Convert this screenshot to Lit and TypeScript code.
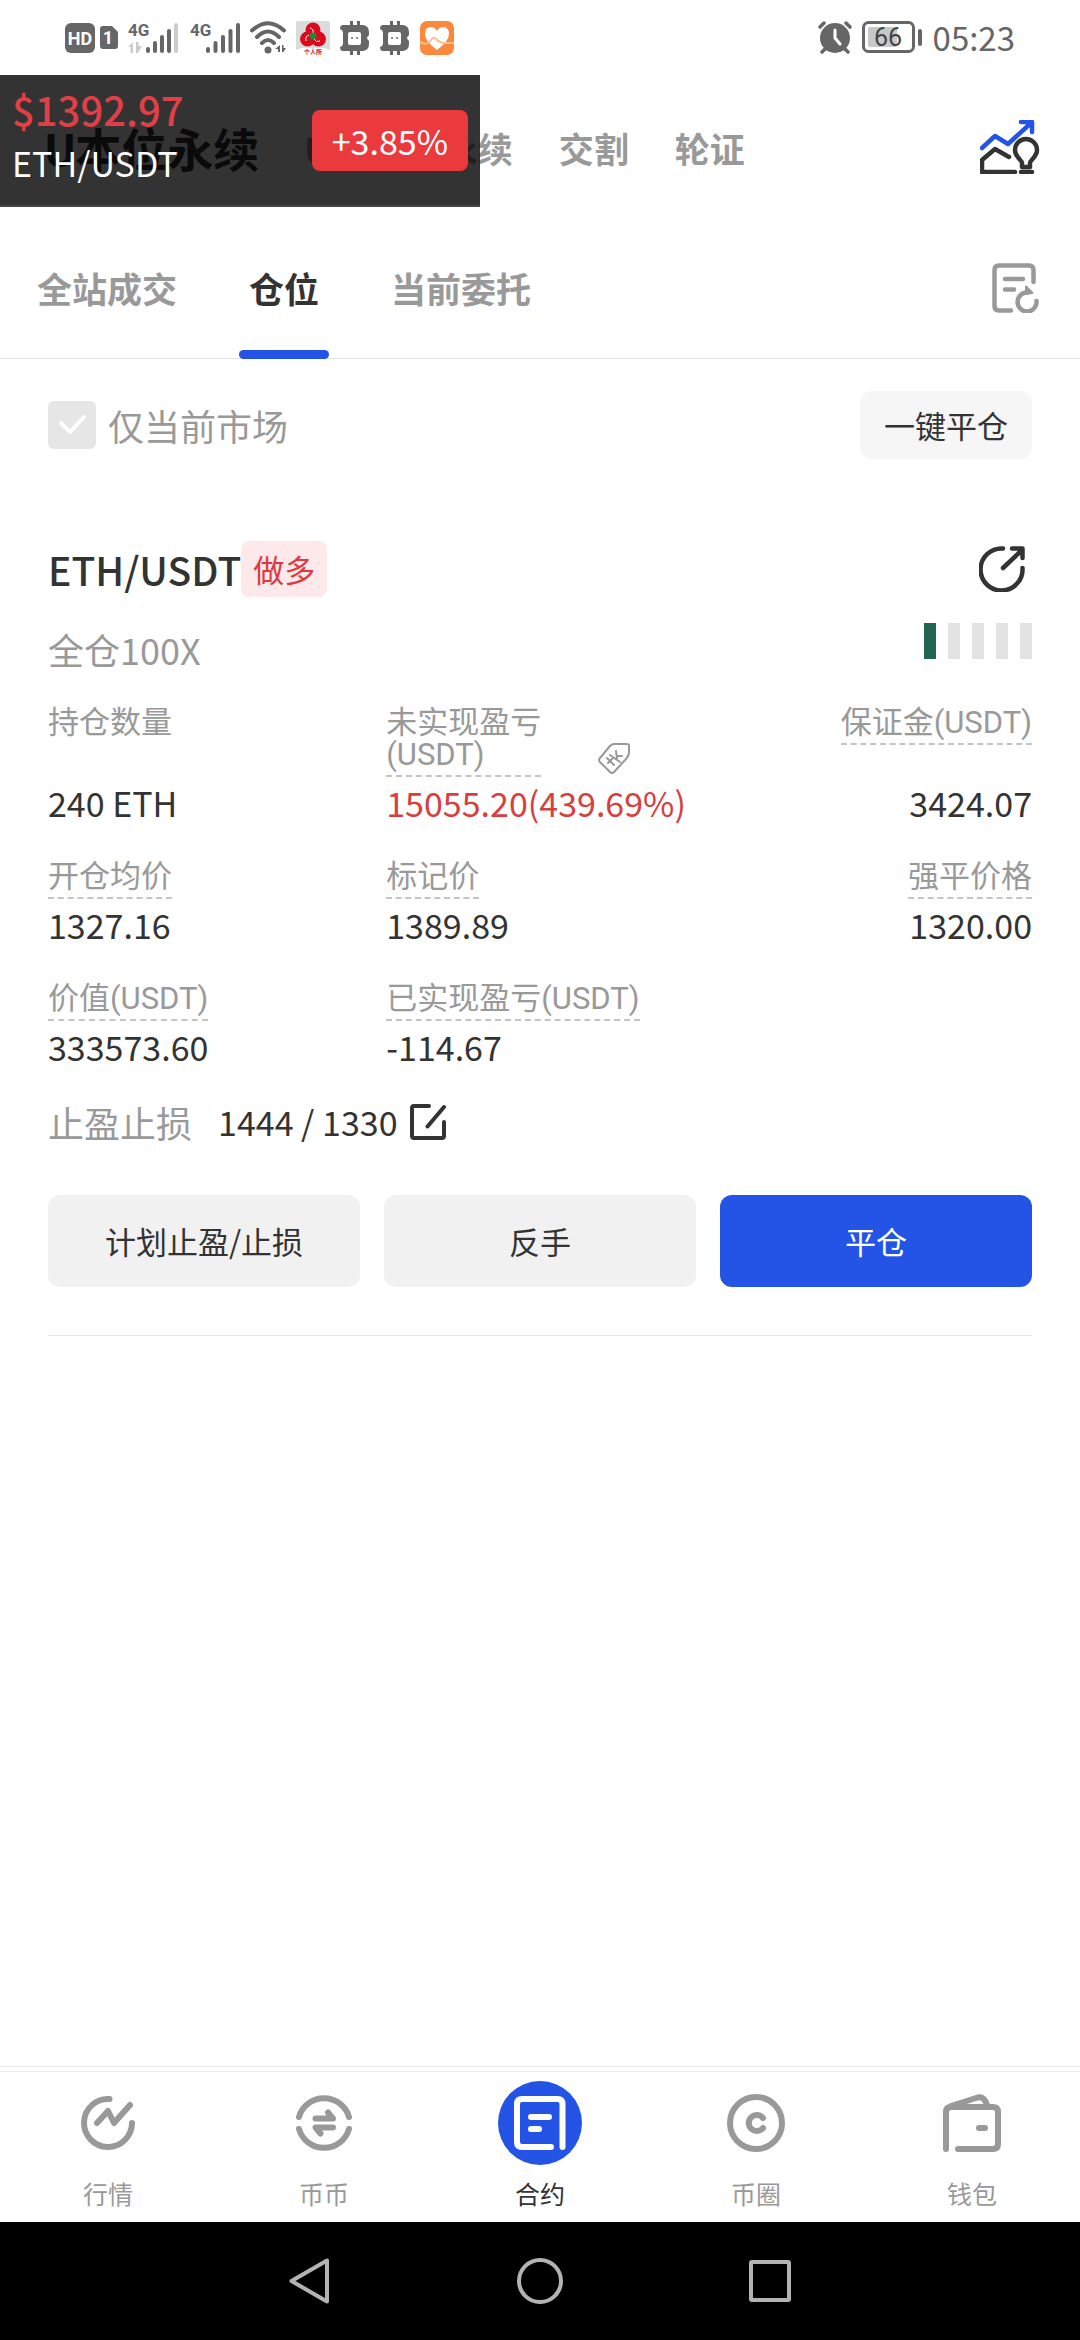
import { LitElement, html, css, svg, nothing } from "lit";
import { customElement, property, state } from "lit/decorators.js";
import { classMap } from "lit/directives/class-map.js";

const base = css`
  :host {
    display: block;
    font-family: "Noto Sans CJK SC", "Noto Sans", sans-serif;
    color: #333;
  }
  * {
    box-sizing: border-box;
  }
  button,
  input {
    font: inherit;
    color: inherit;
    margin: 0;
    padding: 0;
    border: 0;
    background: none;
  }
  svg {
    display: block;
    flex: none;
  }
  .line {
    fill: none;
    stroke: currentColor;
    stroke-linecap: round;
    stroke-linejoin: round;
  }
`;

/* Cellular signal: network label over data arrows, five rising bars. */
const signal = (start: number, pitch: number, bars: number, data: boolean) => svg`
  <text class="net" x="0" y="15">4G</text>
  ${data
    ? svg`<path fill="#ccc" d="M5 21v11H2.500v-6H0zM8 32V21h2.500v4H14l-4 7z"></path>`
    : nothing}
  ${[0, 1, 2, 3, 4].map(
    (i) => svg`<rect x=${start + i * pitch} y=${26 - i * 6} width="4" height=${6 + i * 6} rx="2"
      fill=${i < bars ? "#666" : "#ccc"}></rect>`
  )}`;

const bitcoinBot = html`
  <svg width="30" height="34" viewBox="0 0 30 34" aria-hidden="true">
    <path fill="#666" d="M10 0h3v4h4V0h3v4h3q6 1 6 7v3q-2 2-2 3t2 3v3q0 6-6 7h-3v4h-3v-4h-4v4h-3v-4H3q-3 0-3-4 3-1 3-4V12Q3 9 0 8q0-4 3-4h7z"></path>
    <rect x="8" y="11" width="13" height="13" rx="2" fill="#fff"></rect>
    <circle cx="12" cy="17" r="1" fill="#666"></circle>
    <circle cx="17" cy="17" r="1" fill="#666"></circle>
  </svg>`;

@customElement("status-bar")
class StatusBar extends LitElement {
  static styles = [
    base,
    css`
      .bar {
        display: flex;
        align-items: center;
        height: 75px;
        padding: 0 65px;
        color: #666;
      }
      .icons {
        display: flex;
        align-items: center;
        gap: 10px;
      }
      .pair {
        display: flex;
        align-items: center;
        gap: 5px;
      }
      .right {
        margin-left: auto;
      }
      .time {
        font-size: 33px;
        line-height: 36px;
        padding-bottom: 2px;
      }
      .net {
        font: 700 17px Roboto, sans-serif;
        fill: #666;
      }
      .hd {
        font: 700 18px Roboto, sans-serif;
        fill: #fff;
      }
      .tiny {
        font: 700 6px "Noto Sans CJK SC", sans-serif;
        fill: #d8101c;
      }
      .level {
        font: 400 25px Roboto, sans-serif;
        fill: #444;
      }
    `,
  ];
  render() {
    return html`
      <div class="bar">
        <div class="icons">
          <div class="pair">
            <svg width="30" height="30" viewBox="0 0 30 30">
              <rect width="30" height="30" rx="6" fill="#666"></rect>
              <text class="hd" x="15" y="22" text-anchor="middle">HD</text>
            </svg>
            <svg width="18" height="23" viewBox="0 0 18 23">
              <path fill="#666" d="M3 0h9l6 6v14q0 3-3 3H3q-3 0-3-3V3q0-3 3-3z"></path>
              <text class="hd" x="8" y="18" text-anchor="middle">1</text>
            </svg>
          </div>
          <svg width="52" height="33" viewBox="0 0 52 33">${signal(18, 7, 4, true)}</svg>
          <svg width="50" height="33" viewBox="0 0 50 33">${signal(16, 7.5, 5, false)}</svg>
          <svg width="36" height="33" viewBox="0 0 36 33" color="#666">
            <g class="line" stroke-width="4">
              <path d="M2 9.500Q18-5 34 9.500M7 16Q18 5 29 16M12 22q6-6 12 0"></path>
            </g>
            <circle cx="18" cy="29" r="3.500" fill="#666"></circle>
            <path fill="#666" d="M30 24v7h-2v-3h-3zM32 31v-7h1.500v3H36l-2.500 4z"></path>
          </svg>
          <svg width="34" height="34" viewBox="0 0 34 34">
            <path fill="#d9dcdd" d="M2 0h30q2 0 2 2v27q-9-4-17-1-8-3-17 1V2q0-2 2-2z"></path>
            <g fill="#dc0a1c">
              <circle cx="17" cy="9" r="7.500"></circle>
              <circle cx="11.500" cy="18" r="7.500"></circle>
              <circle cx="22.500" cy="18" r="7.500"></circle>
            </g>
            <path fill="none" stroke="#fff" d="M14 7q4 1 3 5M10 20q-1-5 3-6M24 20q-4 2-6-2"></path>
            <circle cx="17" cy="15" r="3.500" fill="#1d8a3e"></circle>
            <text class="tiny" x="17" y="33" text-anchor="middle">个人所</text>
          </svg>
          ${bitcoinBot} ${bitcoinBot}
          <svg width="34" height="34" viewBox="0 0 34 34">
            <rect width="34" height="34" rx="7" fill="#fb883c"></rect>
            <path fill="#fff" d="M17 29Q5 20 5 13q0-7 6-7 4 0 6 4 2-4 6-4 6 0 6 7 0 7-12 16z"></path>
            <path fill="none" stroke="#ffc18f" stroke-width="2" d="M0 21l5 2q3 0 6-4t5-1q4 4 9 4h9"></path>
          </svg>
        </div>
        <div class="icons right">
          <svg width="34" height="33" viewBox="0 0 34 33">
            <circle cx="17" cy="17" r="15" fill="#666"></circle>
            <path class="line" color="#666" stroke-width="3.500" d="M2 6l4-4M32 6l-4-4M4 31l4-4M30 31l-4-4"></path>
            <path class="line" color="#fff" stroke-width="3" d="M17 9v8l5 6"></path>
          </svg>
          <svg width="61" height="33" viewBox="0 0 61 33">
            <rect x="1.500" y="1.500" width="50" height="29" rx="5" fill="none" stroke="#666" stroke-width="3"></rect>
            <rect x="6" y="6" width="29" height="20" rx="2" fill="#c8c8c8"></rect>
            <rect x="56" y="8" width="4" height="17" rx="2" fill="#666"></rect>
            <text class="level" x="26" y="25" text-anchor="middle">66</text>
          </svg>
          <span class="time">05:23</span>
        </div>
      </div>
    `;
  }
}

/* Floating quote shown above the page. */
@customElement("price-float")
class PriceFloat extends LitElement {
  static styles = [
    base,
    css`
      .box {
        display: flex;
        align-items: center;
        justify-content: space-between;
        width: 480px;
        height: 132px;
        padding: 0 12px;
        background: rgba(0, 0, 0, 0.8);
        border-bottom: 2px solid #444;
      }
      .price {
        font-size: 40px;
        font-weight: 500;
        line-height: 54px;
        color: #e04045;
      }
      .pair {
        font-size: 34px;
        line-height: 54px;
        color: #fff;
      }
      .texts {
        padding-bottom: 8px;
      }
      .change {
        padding: 0 20px;
        border-radius: 8px;
        background: #ea3a3e;
        color: #fff;
        font-size: 34px;
        line-height: 61px;
      }
    `,
  ];
  render() {
    return html`
      <div class="box">
        <div class="texts">
          <div class="price">$1392.97</div>
          <div class="pair">ETH/USDT</div>
        </div>
        <div class="change">+3.85%</div>
      </div>
    `;
  }
}

interface Metric {
  label: string;
  value: string;
  hint?: boolean;
  share?: boolean;
  up?: boolean;
  end?: boolean;
}

const metrics: Metric[] = [
  { label: "持仓数量", value: "240 ETH" },
  { label: "未实现盈亏(USDT)", value: "15055.20(439.69%)", hint: true, share: true, up: true },
  { label: "保证金(USDT)", value: "3424.07", hint: true, end: true },
  { label: "开仓均价", value: "1327.16", hint: true },
  { label: "标记价", value: "1389.89", hint: true },
  { label: "强平价格", value: "1320.00", hint: true, end: true },
  { label: "价值(USDT)", value: "333573.60", hint: true },
  { label: "已实现盈亏(USDT)", value: "-114.67", hint: true },
];

@customElement("position-card")
class PositionCard extends LitElement {
  @property({ type: Number }) risk = 1;

  static styles = [
    base,
    css`
      .card {
        padding: 0 0 48px;
        border-bottom: 1px solid #e6e6e6;
      }
      .row {
        display: flex;
        align-items: center;
        justify-content: space-between;
      }
      .head {
        height: 56px;
        padding-right: 7px;
      }
      .symbol {
        display: flex;
        align-items: center;
      }
      h2 {
        margin: 0;
        font-size: 39px;
        font-weight: 500;
        line-height: 56px;
      }
      .side {
        padding: 0 12px;
        border-radius: 8px;
        background: #fde9ea;
        color: #dc3a40;
        font-size: 31px;
        line-height: 56px;
      }
      .mode {
        margin-top: 26px;
        font-size: 36px;
        line-height: 52px;
        color: #999;
      }
      .risk {
        display: flex;
        gap: 12px;
        padding-bottom: 16px;
      }
      .tick {
        width: 12px;
        height: 36px;
        background: #e3e3e3;
      }
      .tick.on {
        background: #216651;
      }
      .metrics {
        display: grid;
        grid-template-columns: 11fr 13fr 8fr;
        row-gap: 36px;
        margin: 32px 0 0;
      }
      .metric {
        display: flex;
        flex-direction: column;
        align-items: flex-start;
        justify-content: space-between;
        gap: 4px;
      }
      .metric.end {
        align-items: flex-end;
      }
      dt {
        display: flex;
        align-items: flex-end;
        gap: 57px;
        font-family: Roboto, "Noto Sans CJK SC", sans-serif;
        font-size: 31px;
        line-height: 32px;
        color: #999;
        white-space: nowrap;
      }
      .hint {
        padding-bottom: 4px;
        border-bottom: 2px dashed #c4c4c4;
      }
      .narrow {
        width: 155px;
        white-space: normal;
      }
      dd {
        margin: 0;
        font-size: 34px;
        line-height: 44px;
      }
      dd.up {
        color: #d6403f;
      }
      .limits {
        display: flex;
        align-items: center;
        margin-top: 31px;
        font-size: 34px;
        line-height: 44px;
      }
      .limits .name {
        font-size: 36px;
        color: #999;
        padding-right: 26px;
      }
      .edit {
        padding-left: 12px;
      }
      .actions {
        display: grid;
        grid-template-columns: repeat(3, 1fr);
        gap: 24px;
        margin-top: 51px;
      }
      .action {
        border-radius: 12px;
        background: #f1f1f1;
        font-size: 31px;
        line-height: 92px;
      }
      .action.primary {
        background: #2354e6;
        color: #fff;
      }
    `,
  ];

  private metric(m: Metric) {
    return html`
      <div class=${classMap({ metric: true, end: !!m.end })}>
        <dt>
          <span class=${classMap({ hint: !!m.hint, narrow: !!m.share })}>${m.label}</span>
          ${m.share
            ? html`<svg width="32" height="35" viewBox="0 0 32 35" color="#999" aria-hidden="true">
                <path class="line" stroke-width="2" d="M16 2h13q2 0 2 2v6q0 4-3 7L16 30q-2 2-4 0L2 20q-2-2 0-4L12 4q2-2 4-2z"></path>
                <path class="line" stroke-width="2" d="M9 16l7 7M12 13l10 7M10 21l5-5M18 9l1 8M20 14h4"></path>
              </svg>`
            : nothing}
        </dt>
        <dd class=${classMap({ up: !!m.up })}>${m.value}</dd>
      </div>
    `;
  }

  render() {
    return html`
      <article class="card">
        <div class="row head">
          <div class="symbol">
            <h2>ETH/USDT</h2>
            <span class="side">做多</span>
          </div>
          <button aria-label="分享">
            <svg width="46" height="46" viewBox="0 0 46 46">
              <path class="line" stroke-width="4.500" d="M24 2.500A21 21 0 1 0 43.500 22M24 22L43 4M33 2.500h10.500V12"></path>
            </svg>
          </button>
        </div>
        <div class="row mode">
          <span>全仓100X</span>
          <div class="risk">
            ${[1, 2, 3, 4, 5].map((i) => html`<i class=${classMap({ tick: true, on: i <= this.risk })}></i>`)}
          </div>
        </div>
        <dl class="metrics">${metrics.map((m) => this.metric(m))}</dl>
        <div class="limits">
          <span class="name">止盈止损</span>
          <span>1444 / 1330</span>
          <button class="edit" aria-label="修改">
            <svg width="36" height="36" viewBox="0 0 36 36">
              <path class="line" stroke-width="4" d="M19 2H4Q2 2 2 4v28q0 2 2 2h28q2 0 2-2V18M17.500 22.500L34 3"></path>
            </svg>
          </button>
        </div>
        <div class="actions">
          <button class="action">计划止盈/止损</button>
          <button class="action">反手</button>
          <button class="action primary">平仓</button>
        </div>
      </article>
    `;
  }
}

const tabIcons = [
  svg`<path d="M30.500 5A24 24 0 1 0 53 29M18 29l11-12 6 12L51 11"></path>`,
  svg`<path d="M4 23a26 26 0 0 1 50 0M4 35a26 26 0 0 0 50 0M20.500 24.500h17.500l-5-6M38 33.500H20.500l5 6"></path>`,
  svg`<path d="M51.500 53V10q0-5-5-5H11q-5 0-5 5v38q0 5 5 5h29M20 23h18M20 35h8"></path>`,
  svg`<circle cx="29" cy="29" r="26"></circle><path d="M36 24a8 8 0 1 0 0 10"></path>`,
  svg`<path d="M3 55V18q0-5 5-5h42q5 0 5 5v32q0 5-5 5H15M8 12l25-8q8-3 11 7M36 34h6"></path>`,
];
const tabNames = ["行情", "币币", "合约", "币圈", "钱包"];

@customElement("tab-bar")
class TabBar extends LitElement {
  @state() private active = 2;

  static styles = [
    base,
    css`
      nav {
        display: grid;
        grid-template-columns: repeat(5, 1fr);
        height: 156px;
        border-top: 1px solid #ebebeb;
      }
      .tab {
        display: flex;
        flex-direction: column;
        align-items: center;
        margin-top: 4px;
        padding-top: 9px;
        border-top: 1px solid #ebebeb;
        color: #999;
        font-size: 25px;
        line-height: 36px;
      }
      .disc {
        display: flex;
        align-items: center;
        justify-content: center;
        width: 84px;
        height: 84px;
        border-radius: 42px;
        margin-bottom: 10px;
      }
      .on .disc {
        background: #2354e6;
        color: #fff;
      }
      .on {
        color: #333;
      }
    `,
  ];
  render() {
    return html`
      <nav>
        ${tabNames.map(
          (name, i) => html`
            <button class=${classMap({ tab: true, on: i === this.active })} @click=${() => (this.active = i)}>
              <span class="disc">
                <svg width="58" height="58" viewBox="0 0 58 58">
                  <g class="line" stroke-width="6">${tabIcons[i]}</g>
                </svg>
              </span>
              ${name}
            </button>
          `
        )}
      </nav>
    `;
  }
}

@customElement("app-root")
class AppRoot extends LitElement {
  @state() private tab = 1;

  static styles = [
    base,
    css`
      .page {
        position: relative;
        display: flex;
        flex-direction: column;
        min-height: 100vh;
        background: #fff;
      }
      .float {
        position: absolute;
        top: 75px;
        left: 0;
      }
      .markets {
        display: flex;
        align-items: center;
        gap: 46px;
        height: 150px;
        padding: 0 40px 6px 45px;
        font-family: Roboto, "Noto Sans CJK SC", sans-serif;
        font-size: 35px;
        font-weight: 700;
        color: #999;
      }
      .markets .current {
        font-size: 46px;
        color: #333;
      }
      .push {
        margin-left: auto;
      }
      .tabs {
        display: flex;
        align-items: stretch;
        gap: 48px;
        height: 134px;
        padding: 0 40px 0 25px;
        border-bottom: 1px solid #e6e6e6;
        font-size: 35px;
        font-weight: 700;
        color: #999;
      }
      .tabs .push {
        padding-bottom: 8px;
      }
      .tab {
        display: flex;
        flex-direction: column;
        align-items: center;
        justify-content: space-between;
        margin-bottom: -1px;
      }
      .tab.on {
        color: #333;
      }
      .word {
        padding: 0 12px;
        line-height: 125px;
      }
      .mark {
        width: 90px;
        height: 9px;
        border-radius: 5px;
      }
      .on .mark {
        background: #2354e6;
      }
      .filters {
        display: flex;
        align-items: center;
        justify-content: space-between;
        height: 68px;
        margin: 32px 0 82px;
      }
      .only {
        display: flex;
        align-items: center;
        gap: 12px;
        font-size: 36px;
        line-height: 48px;
        color: #999;
      }
      .check {
        display: grid;
      }
      .check > * {
        grid-area: 1 / 1;
      }
      .check input {
        appearance: none;
        width: 48px;
        height: 48px;
        border-radius: 6px;
        background: #e6e6e6;
      }
      .check svg {
        pointer-events: none;
      }
      .all {
        padding: 0 24px;
        border-radius: 12px;
        background: #f6f6f6;
        font-size: 31px;
        line-height: 68px;
      }
      main {
        flex: 1;
        padding: 0 48px;
      }
      .system {
        display: flex;
        align-items: center;
        justify-content: center;
        height: 118px;
        background: #000;
        color: #b3b3b3;
      }
      .system button {
        display: flex;
        justify-content: center;
        flex: 0 1 230px;
      }
    `,
  ];

  render() {
    return html`
      <div class="page">
        <status-bar></status-bar>
        <header class="markets">
          <button class="current">U本位永续</button>
          <button>USD本位永续</button>
          <button>交割</button>
          <button>轮证</button>
          <button class="push" aria-label="行情分析">
            <svg width="60" height="54" viewBox="0 0 60 54">
              <path class="line" color="#2354e6" stroke-width="4.500" d="M2 28l13-12 13 8L51 3M41 2h11v10"></path>
              <path class="line" color="#333" stroke-width="4.500" d="M29 37l-14-8L2 40v12h33M42 47v-4c0-3-7-6-7-13a11 11 0 0 1 22 0c0 7-7 10-7 13v4zM41 52h11"></path>
            </svg>
          </button>
        </header>
        <div class="tabs">
          ${["全站成交", "仓位", "当前委托"].map(
            (name, i) => html`
              <button class=${classMap({ tab: true, on: i === this.tab })} @click=${() => (this.tab = i)}>
                <span class="word">${name}</span>
                <span class="mark"></span>
              </button>
            `
          )}
          <button class="push" aria-label="历史记录">
            <svg width="48" height="50" viewBox="0 0 48 50" color="#999">
              <path class="line" stroke-width="4.500" d="M41.500 19V7q0-4.500-4.500-4.500H7Q2.500 2.500 2.500 7v36q0 4.500 4.500 4.500h12M13 16h18M13 26.500h9M44.500 38a9.500 9.500 0 1 1-9-8.500"></path>
              <path fill="currentColor" d="M33 23q1-1 2 0l6 6q1 2-1 2l-7 1z"></path>
            </svg>
          </button>
        </div>
        <main>
          <div class="filters">
            <label class="only">
              <span class="check">
                <input type="checkbox" checked />
                <svg width="48" height="48" viewBox="0 0 48 48">
                  <path class="line" color="#fff" stroke-width="4" d="M13 22l9 9 14-15"></path>
                </svg>
              </span>
              仅当前市场
            </label>
            <button class="all">一键平仓</button>
          </div>
          <position-card risk="1"></position-card>
        </main>
        <tab-bar></tab-bar>
        <footer class="system">
          <button aria-label="返回">
            <svg width="42" height="46" viewBox="0 0 42 46">
              <path class="line" stroke-width="4" d="M38 2.500v41L2.500 23z"></path>
            </svg>
          </button>
          <button aria-label="主页">
            <svg width="46" height="46" viewBox="0 0 46 46">
              <circle class="line" stroke-width="4" cx="23" cy="23" r="21"></circle>
            </svg>
          </button>
          <button aria-label="最近">
            <svg width="42" height="42" viewBox="0 0 42 42">
              <rect class="line" stroke-width="4" x="2" y="2" width="38" height="38" rx="1"></rect>
            </svg>
          </button>
        </footer>
        <price-float class="float"></price-float>
      </div>
    `;
  }
}
